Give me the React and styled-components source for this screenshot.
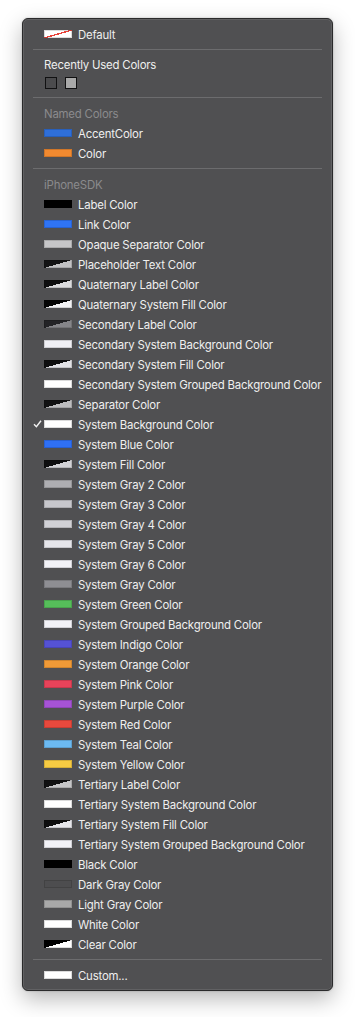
import React from "react";
import styled, { createGlobalStyle, css } from "styled-components";

const GlobalStyle = createGlobalStyle`
  html, body { margin: 0; padding: 0; background: #ffffff; }
  body { font-family: Inter, "Liberation Sans", sans-serif; }
`;

const Page = styled.div`
  padding: 18px 0 30px 22px;
`;

const Menu = styled.div`
  box-sizing: border-box;
  width: 311px;
  padding: 5px 0 5px 0;
  background: #505052;
  border: 1px solid #2a2a2b;
  border-radius: 6px;
  box-shadow: inset 0 0 0 1px rgba(255, 255, 255, 0.1), 0 8px 22px rgba(0, 0, 0, 0.28),
    0 0 2px rgba(0, 0, 0, 0.25);
`;

const Item = styled.div`
  display: flex;
  align-items: center;
  height: 20px;
  color: #efefef;
  font-size: 11.4px;
  letter-spacing: -0.2px;
  white-space: nowrap;
`;

const CheckCell = styled.span`
  display: flex;
  align-items: center;
  flex-shrink: 0;
  box-sizing: border-box;
  width: 21px;
  padding-left: 10px;
`;

const Swatch = styled.span`
  display: block;
  flex-shrink: 0;
  width: 28px;
  height: 8px;
  margin-right: 6px;
  box-sizing: border-box;
  box-shadow: inset 0 0 0 1px rgba(0, 0, 0, 0.14);
  ${({ $kind, $a, $b }) =>
    $kind === "split"
      ? css`
          background: linear-gradient(to bottom right, ${$a} 50%, ${$b} 50%);
        `
      : $kind === "none"
      ? css`
          background: linear-gradient(
            to bottom right,
            #ffffff calc(50% - 0.7px),
            #e8433a calc(50% - 0.7px),
            #e8433a calc(50% + 0.7px),
            #ffffff calc(50% + 0.7px)
          );
        `
      : css`
          background: ${$a};
        `}
`;

const Label = styled.span`
  display: block;
  margin-top: 1px;
`;

const Header = styled.div`
  display: flex;
  align-items: center;
  height: ${({ $h }) => $h || 20}px;
  padding-left: 21px;
  padding-top: 1px;
  box-sizing: border-box;
  font-size: 11.4px;
  letter-spacing: -0.2px;
  color: ${({ $dim }) => ($dim ? "#8b8b8d" : "#efefef")};
`;

const Separator = styled.div`
  height: 1px;
  margin: 5px 10px;
  background: #6c6c6e;
`;

const RecentRow = styled.div`
  display: flex;
  align-items: center;
  gap: 8px;
  height: 18px;
  padding-left: 22px;
`;

const RecentSquare = styled.span`
  display: block;
  box-sizing: border-box;
  width: 12px;
  height: 12px;
  border: 1px solid #111112;
  background: ${({ $c }) => $c};
`;

const Check = () => (
  <svg width="9" height="8" viewBox="0 0 9 8">
    <path d="M1 4.3 L3.4 6.8 L8 0.8" fill="none" stroke="#f2f2f2" strokeWidth="1.4" />
  </svg>
);

const named = [
  { name: "AccentColor", a: "#2f6fd9" },
  { name: "Color", a: "#f28a30" },
];

const sdk = [
  { name: "Label Color", a: "#000000" },
  { name: "Link Color", a: "#2f74f5" },
  { name: "Opaque Separator Color", a: "#c6c6c8" },
  { name: "Placeholder Text Color", a: "#131314", b: "#c2c2c4" },
  { name: "Quaternary Label Color", a: "#0e0e0f", b: "#dbdbdd" },
  { name: "Quaternary System Fill Color", a: "#050505", b: "#f2f2f4" },
  { name: "Secondary Label Color", a: "#232326", b: "#858589" },
  { name: "Secondary System Background Color", a: "#f0f0f5" },
  { name: "Secondary System Fill Color", a: "#0e0e0f", b: "#e2e2e6" },
  { name: "Secondary System Grouped Background Color", a: "#ffffff" },
  { name: "Separator Color", a: "#111112", b: "#bdbdbf" },
  { name: "System Background Color", a: "#ffffff", checked: true },
  { name: "System Blue Color", a: "#2f70f5" },
  { name: "System Fill Color", a: "#0e0e0f", b: "#d3d3d7" },
  { name: "System Gray 2 Color", a: "#aeaeb2" },
  { name: "System Gray 3 Color", a: "#c7c7cc" },
  { name: "System Gray 4 Color", a: "#d1d1d6" },
  { name: "System Gray 5 Color", a: "#e5e5ea" },
  { name: "System Gray 6 Color", a: "#f2f2f7" },
  { name: "System Gray Color", a: "#8e8e93" },
  { name: "System Green Color", a: "#56be5a" },
  { name: "System Grouped Background Color", a: "#f2f2f7" },
  { name: "System Indigo Color", a: "#5552d4" },
  { name: "System Orange Color", a: "#f09a37" },
  { name: "System Pink Color", a: "#e8435a" },
  { name: "System Purple Color", a: "#a653d6" },
  { name: "System Red Color", a: "#e8493d" },
  { name: "System Teal Color", a: "#6cbaf2" },
  { name: "System Yellow Color", a: "#f6cb43" },
  { name: "Tertiary Label Color", a: "#111112", b: "#c6c6c8" },
  { name: "Tertiary System Background Color", a: "#ffffff" },
  { name: "Tertiary System Fill Color", a: "#0e0e0f", b: "#e6e6ea" },
  { name: "Tertiary System Grouped Background Color", a: "#f2f2f7" },
  { name: "Black Color", a: "#000000" },
  { name: "Dark Gray Color", a: "#4d4d4f" },
  { name: "Light Gray Color", a: "#a9a9a9" },
  { name: "White Color", a: "#ffffff" },
  { name: "Clear Color", a: "#000000", b: "#ffffff" },
];

const ColorItem = ({ name, a, b, checked, kind }) => (
  <Item>
    <CheckCell>{checked ? <Check /> : null}</CheckCell>
    <Swatch $kind={kind || (b ? "split" : "solid")} $a={a} $b={b} />
    <Label>{name}</Label>
  </Item>
);

export default function App() {
  return (
    <>
      <GlobalStyle />
      <Page>
        <Menu>
          <ColorItem name="Default" kind="none" />
          <Separator />
          <Header $h={19}>Recently Used Colors</Header>
          <RecentRow>
            <RecentSquare $c="#4b4b4d" />
            <RecentSquare $c="#a9a9a9" />
          </RecentRow>
          <Separator />
          <Header $dim>Named Colors</Header>
          {named.map((c) => (
            <ColorItem key={c.name} {...c} />
          ))}
          <Separator />
          <Header $dim>iPhoneSDK</Header>
          {sdk.map((c) => (
            <ColorItem key={c.name} {...c} />
          ))}
          <Separator />
          <ColorItem name="Custom..." a="#ffffff" />
        </Menu>
      </Page>
    </>
  );
}
